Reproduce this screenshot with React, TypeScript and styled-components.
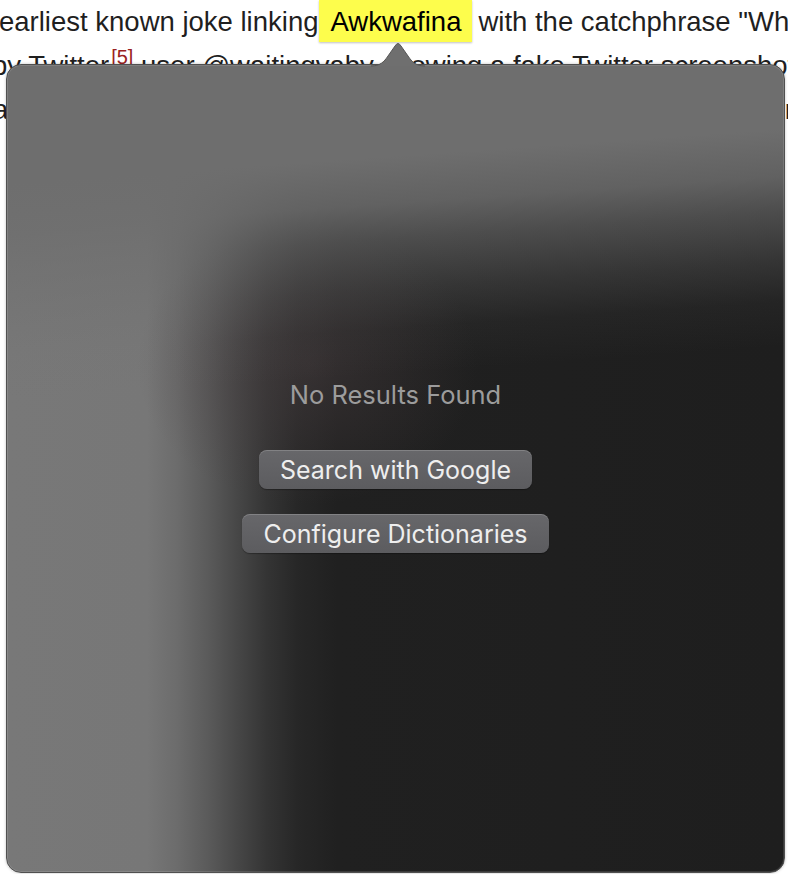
import React from "react";
import styled, { createGlobalStyle } from "styled-components";

const Global = createGlobalStyle`
  html, body { margin: 0; padding: 0; background: #ffffff; overflow: hidden; }
  #root { width: 788px; height: 874px; }
`;

const Page = styled.div`
  position: relative;
  width: 788px;
  height: 874px;
  overflow: hidden;
  background: #ffffff;
`;

const Article = styled.div`
  display: flex;
  flex-direction: column;
  font-family: "Liberation Sans", Arial, sans-serif;
  font-size: 27.5px;
  color: #1f1f1f;
`;

const Line = styled.div<{ $indent: number }>`
  height: 44px;
  line-height: 44px;
  white-space: nowrap;
  margin-left: ${(p) => p.$indent}px;
`;

const Highlight = styled.span`
  display: inline-block;
  background: #fdfd4c;
  color: #000;
  padding: 0 11px 0 11px;
  margin: 0 6px 0 1px;
  height: 42px;
  line-height: 44px;
  box-shadow: 0 1px 2px rgba(0, 0, 0, 0.25);
  vertical-align: top;
`;

const Ref = styled.sup`
  color: #9a2121;
  font-size: 20px;
  line-height: 0;
  vertical-align: 11px;
  margin-left: 2px;
`;

const Popover = styled.div`
  position: absolute;
  left: 6px;
  top: 64px;
  width: 777px;
  height: 807px;
  box-sizing: content-box;
  border: 1px solid #505050;
  border-radius: 15px;
  box-shadow: 0 0 3px rgba(0, 0, 0, 0.25), inset 0 0 0 1px rgba(255, 255, 255, 0.12);
  background:
    linear-gradient(176deg, rgba(110, 110, 110, 1) 0px, rgba(110, 110, 110, 1) 118px, rgba(110, 110, 110, 0.84) 165px, rgba(110, 110, 110, 0.58) 200px, rgba(110, 110, 110, 0.28) 250px, rgba(110, 110, 110, 0.08) 290px, rgba(110, 110, 110, 0) 335px),
    radial-gradient(ellipse 170px 140px at 300px 300px, rgba(72, 62, 64, 0.5), rgba(72, 62, 64, 0)),
    linear-gradient(90deg, #787878 0px, #777777 140px, #6c6c6c 170px, #5b5b5b 200px, #474747 230px, #343434 260px, #272727 290px, #202020 330px, #1e1e1e 100%);
  display: flex;
  flex-direction: column;
  align-items: center;
  justify-content: center;
  font-family: Inter, "Liberation Sans", sans-serif;
`;

const Arrow = styled.svg`
  position: absolute;
  left: 364px;
  top: -23px;
  width: 54px;
  height: 25px;
  overflow: visible;
`;

const Content = styled.div`
  display: flex;
  flex-direction: column;
  align-items: center;
  gap: 25px;
  margin-top: -4px;
`;

const Message = styled.div`
  color: #9c9c9c;
  font-size: 25.5px;
  line-height: 30px;
  margin-bottom: 15px;
`;

const Button = styled.div`
  display: flex;
  align-items: center;
  justify-content: center;
  height: 39px;
  padding: 0 21px;
  border-radius: 8px;
  background: linear-gradient(180deg, #67676a 0%, #5c5c5f 100%);
  box-shadow: inset 0 1px 0 rgba(255, 255, 255, 0.18), 0 1px 1px rgba(0, 0, 0, 0.3);
  color: #eeeeee;
  font-size: 25px;
`;

export default function App() {
  return (
    <Page>
      <Global />
      <Article>
        <Line $indent={-1}>
          earliest known joke linking<Highlight>Awkwafina</Highlight>with the catchphrase "What's up, guys?"
        </Line>
        <Line $indent={-8}>
          by Twitter<Ref>[5]</Ref> user @waitingvaby showing a fake Twitter screenshot of
        </Line>
        <Line $indent={-7}>
          a post from the actress where she responded to a fan with the phrase, which
        </Line>
      </Article>
      <Popover>
        <Arrow viewBox="0 0 54 25">
          <path
            d="M0 24 C9 24 13 20 17 14 L24 4 Q27 -1 30 4 L37 14 C41 20 45 24 54 24"
            fill="#6f6f6f"
            stroke="#555555"
            strokeWidth="1"
          />
        </Arrow>
        <Content>
          <Message>No Results Found</Message>
          <Button>Search with Google</Button>
          <Button>Configure Dictionaries</Button>
        </Content>
      </Popover>
    </Page>
  );
}
